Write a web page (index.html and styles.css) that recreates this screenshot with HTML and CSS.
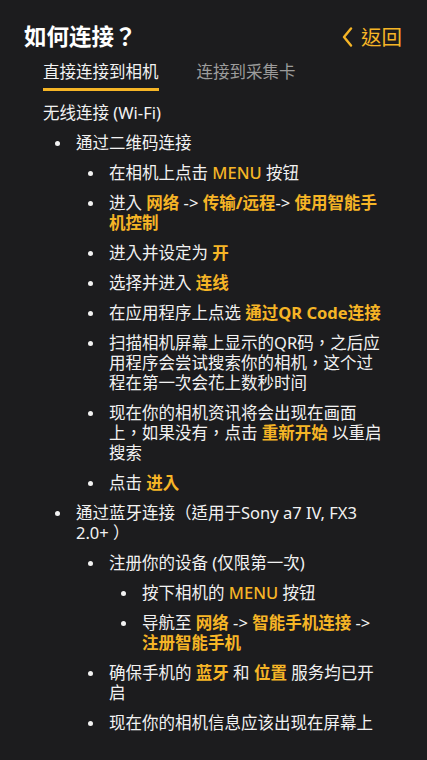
FILE: index.html
```html
<!DOCTYPE html>
<html lang="zh-TW">
<head>
  <meta charset="UTF-8">
  <meta name="viewport" content="width=device-width, initial-scale=1.0">
  <title>如何连接？</title>
  <link rel="stylesheet" href="styles.css">
</head>
<body>
  <div class="page">
    <header class="top-bar">
      <h1>如何连接？</h1>
      <a class="back" href="#">
        <svg width="11" height="20" viewBox="0 0 11 20"><polyline points="9,1.5 2,10 9,18.5" fill="none" stroke="#f6b526" stroke-width="2.4" stroke-linecap="round" stroke-linejoin="round"/></svg>
        <span>返回</span>
      </a>
    </header>

    <nav class="tabs">
      <span class="tab active">直接连接到相机</span>
      <span class="tab">连接到采集卡</span>
    </nav>

    <div class="content">
      <p class="section">无线连接 (Wi-Fi)</p>
      <ul>
        <li><div class="txt">通过二维码连接
          <ul>
            <li><div class="txt">在相机上点击 <em class="thin">MENU</em> 按钮</div></li>
            <li><div class="txt">进入 <em>网络</em> -&gt; <em>传输/远程</em>-&gt; <em>使用智能手机控制</em></div></li>
            <li><div class="txt">进入并设定为 <em>开</em></div></li>
            <li><div class="txt">选择并进入 <em>连线</em></div></li>
            <li><div class="txt">在应用程序上点选 <em>通过QR Code连接</em></div></li>
            <li><div class="txt">扫描相机屏幕上显示的QR码，之后应用程序会尝试搜索你的相机，这个过程在第一次会花上数秒时间</div></li>
            <li><div class="txt">现在你的相机资讯将会出现在画面上，如果没有，点击 <em>重新开始</em> 以重启搜索</div></li>
            <li><div class="txt">点击 <em>进入</em></div></li>
          </ul>
        </div></li>
        <li><div class="txt">通过蓝牙连接（适用于Sony a7 IV, FX3 2.0+ ）
          <ul>
            <li><div class="txt">注册你的设备 (仅限第一次)
              <ul>
                <li><div class="txt">按下相机的 <em class="thin">MENU</em> 按钮</div></li>
                <li><div class="txt">导航至 <em>网络</em> -&gt; <em>智能手机连接</em> -&gt; <em>注册智能手机</em></div></li>
              </ul>
            </div></li>
            <li><div class="txt">确保手机的 <em>蓝牙</em> 和 <em>位置</em> 服务均已开启</div></li>
            <li><div class="txt">现在你的相机信息应该出现在屏幕上</div></li>
            <li><div class="txt">点击 <em>配对</em></div></li>
          </ul>
        </div></li>
      </ul>
    </div>
  </div>
</body>
</html>
```

FILE: styles.css
```css
html, body {
  margin: 0;
  padding: 0;
  background-color: #1c1c1e;
}
body {
  font-family: "Noto Sans", "Noto Sans CJK TC", sans-serif;
  color: #f2f2f2;
  font-size: 16.5px;
  line-height: 20px;
}
.page {
  height: 760px;
  display: flex;
  flex-direction: column;
  padding-bottom: 16px;
  box-sizing: border-box;
  overflow: hidden;
}
.top-bar {
  display: flex;
  justify-content: space-between;
  align-items: center;
  padding: 21px 25px 0 24px;
  height: 32px;
}
.top-bar h1 {
  margin: 0;
  font-size: 22.5px;
  font-weight: bold;
  line-height: 30px;
  color: #fff;
}
.back {
  display: flex;
  align-items: center;
  gap: 8px;
  text-decoration: none;
  color: #f6b526;
  font-size: 20.5px;
  line-height: 26px;
}
.tabs {
  display: flex;
  gap: 38px;
  margin: 9px 0 0 43px;
}
.tab {
  color: #9c9c9c;
  padding-bottom: 6px;
  border-bottom: 3px solid transparent;
}
.tab.active {
  color: #f2f2f2;
  border-bottom-color: #f6b526;
}
.content {
  flex: 1;
  overflow: hidden;
  padding: 0 41px 0 43px;
}
.section {
  margin: 12px 0 0 0;
}
ul {
  list-style: none;
  margin: 0;
  padding-left: 12px;
}
li {
  display: flex;
  margin-top: 10px;
}
li::before {
  content: "";
  flex-shrink: 0;
  width: 5px;
  height: 5px;
  border-radius: 50%;
  background-color: #f2f2f2;
  margin: 8px 16px 0 0;
}
.txt {
  flex: 1;
}
em {
  font-style: normal;
  font-weight: bold;
  color: #f6b526;
}
em.thin {
  font-weight: 500;
}
```
